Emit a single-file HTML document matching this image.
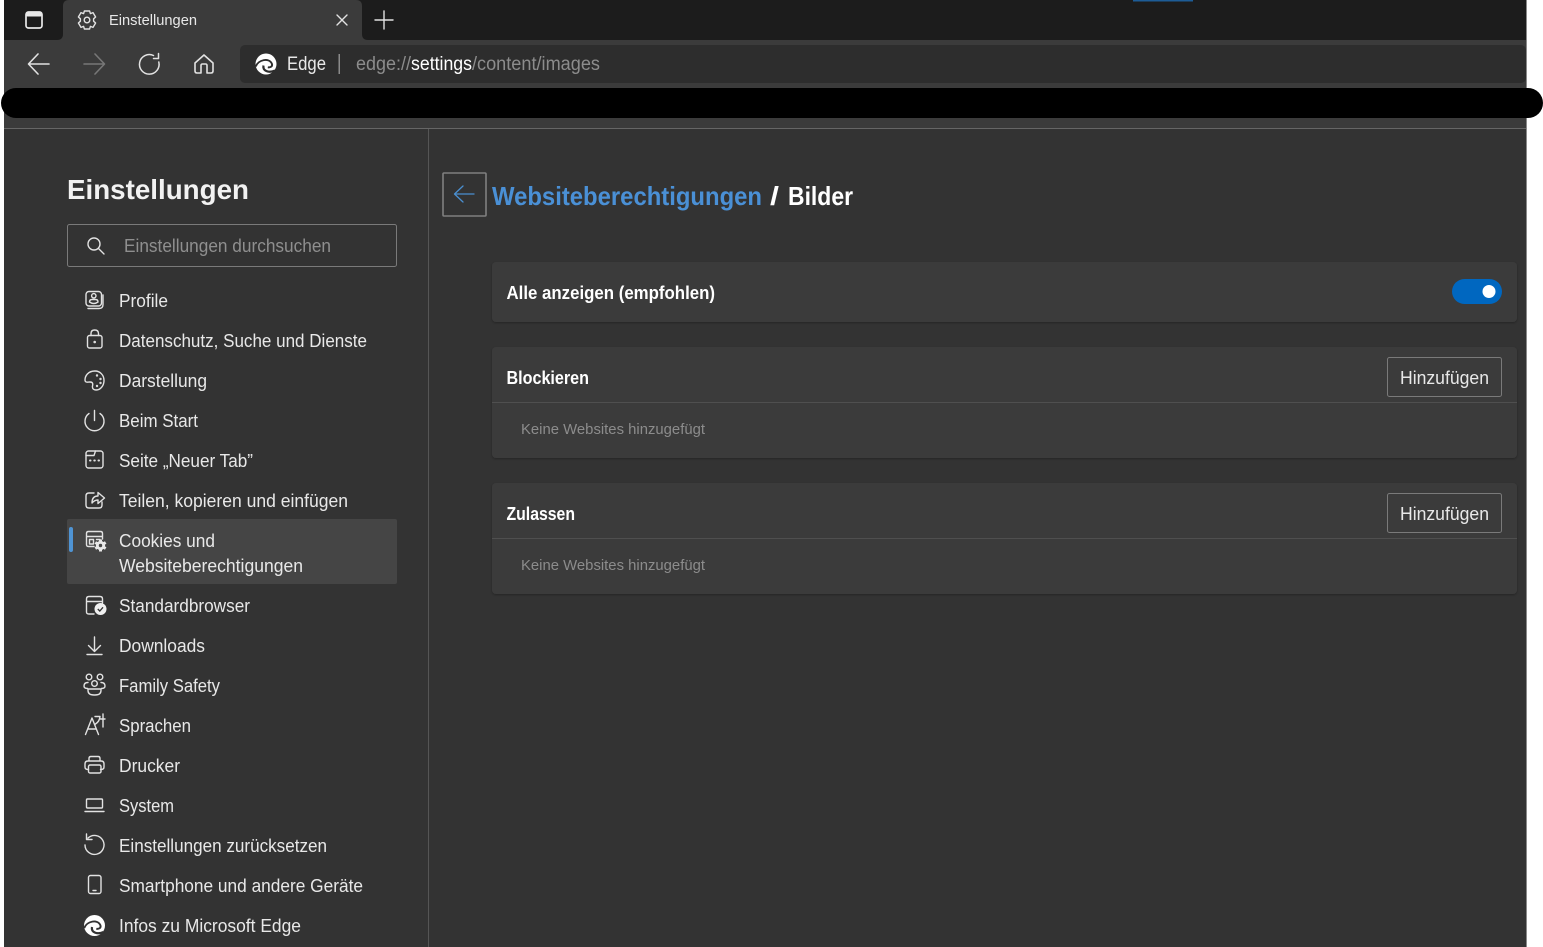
<!DOCTYPE html>
<html lang="de"><head><meta charset="utf-8"><title>Einstellungen</title>
<style>
html,body{margin:0;padding:0;background:#fff;overflow:hidden}
svg{display:block}
text{font-family:"Liberation Sans",sans-serif;fill:#e8e8e8;font-size:18px}
.i{fill:none;stroke:#e2e2e2;stroke-width:1.4;stroke-linecap:round;stroke-linejoin:round}
.b{font-weight:700;fill:#fff}
.m{font-size:15px;fill:#8c8c8c}
</style></head><body>
<svg width="1543" height="947" viewBox="0 0 1543 947" xmlns="http://www.w3.org/2000/svg">
<defs><filter id="s" x="-2%" y="-10%" width="104%" height="120%"><feDropShadow dx="0" dy="1" stdDeviation="1.2" flood-color="#000" flood-opacity=".3"/></filter></defs>
<rect x="4" y="0" width="1522" height="947" fill="#333"/>
<rect x="1526" y="0" width="1" height="947" fill="#8a8a8a"/>
<rect x="4" y="0" width="1522" height="40" fill="#1c1c1c"/>
<rect x="1133" y="0" width="60" height="1.5" fill="#1d5c96"/>
<rect x="4" y="40" width="1522" height="88" fill="#3b3b3b"/>
<path d="M57 40Q63 40 63 34V6Q63 0 69 0H356Q362 0 362 6V34Q362 40 368 40Z" fill="#3b3b3b"/>
<rect x="240" y="45" width="1286" height="38" rx="5" fill="#2d2d2d"/>
<rect x="1" y="88" width="1542" height="30" rx="15" fill="#000"/>
<rect x="4" y="128" width="1522" height="1" fill="#666"/>
<rect x="428" y="129" width="1" height="818" fill="#555"/>

<!-- tab strip -->
<rect x="26" y="12" width="16" height="16" rx="2.500" fill="none" stroke="#e8e8e8" stroke-width="1.700"/>
<rect x="26" y="12" width="16" height="4.500" rx="1.500" fill="#e8e8e8"/>
<g class="i" transform="translate(87,20)"><circle r="2.8"/><path d="M-2.6-9H2.6L3.4-6.4 6-7.4 8.6-3 6.6-1.2V1.2L8.6 3 6 7.4 3.4 6.4 2.6 9H-2.6L-3.4 6.4-6 7.4-8.6 3-6.6 1.2V-1.2L-8.6-3-6-7.4-3.4-6.4Z"/></g>
<text x="109" y="25" style="font-size:15px" textLength="88" lengthAdjust="spacingAndGlyphs">Einstellungen</text>
<path class="i" d="M337 15L347 25M347 15L337 25"/>
<path class="i" d="M384 11V29M375 20H393"/>

<!-- toolbar -->
<path class="i" style="stroke-width:1.6" d="M29 64H49M38 54L28.500 64 38 74"/>
<path class="i" style="stroke:#777;stroke-width:1.600" d="M84 64H104M95 54L104.500 64 95 74"/>
<path class="i" style="stroke-width:1.500" d="M158.800 62A9.800 9.800 0 1 1 153.500 55.500M158.500 53.500V58.500H153.500"/>
<path class="i" style="stroke-width:1.600" d="M195 63L204 55 213 63V71Q213 73 211 73H207V65.500Q207 64 205.500 64H202.500Q201 64 201 65.500V73H197Q195 73 195 71Z"/>
<g transform="translate(266,64)"><circle r="10.500" fill="#fff"/><path d="M-10.300 2.500C-7.500-4.500 3-6.500 5.800-.5 7 2.500 4.500 3.700 1.800 3.300" fill="none" stroke="#2d2d2d" stroke-width="1.900"/><path d="M-2.500 1.500C-3.500 6.500 2 9.500 9 6.500" fill="none" stroke="#2d2d2d" stroke-width="2.200"/></g>
<text x="287" y="70" style="font-size:19px" textLength="39" lengthAdjust="spacingAndGlyphs">Edge</text>
<rect x="338.500" y="54" width="1.500" height="20" fill="#8a8a8a"/>
<text x="356" y="70" style="font-size:19px;fill:#8c8c8c" textLength="55" lengthAdjust="spacingAndGlyphs">edge://</text>
<text x="411" y="70" style="font-size:19px;fill:#fff" textLength="61" lengthAdjust="spacingAndGlyphs">settings</text>
<text x="472" y="70" style="font-size:19px;fill:#8c8c8c" textLength="128" lengthAdjust="spacingAndGlyphs">/content/images</text>

<!-- sidebar head -->
<text x="67" y="199" class="b" style="font-size:28px;fill:#f2f2f2" textLength="182" lengthAdjust="spacingAndGlyphs">Einstellungen</text>
<rect x="67.500" y="224.500" width="329" height="42" rx="2" fill="#333" stroke="#7a7a7a"/>
<g class="i"><circle cx="94" cy="244" r="6"/><path d="M98.500 248.500L104 254"/></g>
<text x="124" y="252" style="fill:#8f8f8f" textLength="207" lengthAdjust="spacingAndGlyphs">Einstellungen durchsuchen</text>

<rect x="67" y="519" width="330" height="65" rx="2" fill="#454545"/>
<rect x="69" y="527" width="4" height="25" rx="2" fill="#4f94d4"/>

<!-- sidebar labels -->
<text x="119" y="307" textLength="49" lengthAdjust="spacingAndGlyphs">Profile</text>
<text x="119" y="347" textLength="248" lengthAdjust="spacingAndGlyphs">Datenschutz, Suche und Dienste</text>
<text x="119" y="387" textLength="88" lengthAdjust="spacingAndGlyphs">Darstellung</text>
<text x="119" y="427" textLength="79" lengthAdjust="spacingAndGlyphs">Beim Start</text>
<text x="119" y="467" textLength="134" lengthAdjust="spacingAndGlyphs">Seite „Neuer Tab”</text>
<text x="119" y="507" textLength="229" lengthAdjust="spacingAndGlyphs">Teilen, kopieren und einfügen</text>
<text x="119" y="547" textLength="96" lengthAdjust="spacingAndGlyphs">Cookies und</text>
<text x="119" y="572" textLength="184" lengthAdjust="spacingAndGlyphs">Websiteberechtigungen</text>
<text x="119" y="612" textLength="131" lengthAdjust="spacingAndGlyphs">Standardbrowser</text>
<text x="119" y="652" textLength="86" lengthAdjust="spacingAndGlyphs">Downloads</text>
<text x="119" y="692" textLength="101" lengthAdjust="spacingAndGlyphs">Family Safety</text>
<text x="119" y="732" textLength="72" lengthAdjust="spacingAndGlyphs">Sprachen</text>
<text x="119" y="772" textLength="61" lengthAdjust="spacingAndGlyphs">Drucker</text>
<text x="119" y="812" textLength="55" lengthAdjust="spacingAndGlyphs">System</text>
<text x="119" y="852" textLength="208" lengthAdjust="spacingAndGlyphs">Einstellungen zurücksetzen</text>
<text x="119" y="892" textLength="244" lengthAdjust="spacingAndGlyphs">Smartphone und andere Geräte</text>
<text x="119" y="932" textLength="182" lengthAdjust="spacingAndGlyphs">Infos zu Microsoft Edge</text>

<!-- sidebar icons -->
<g class="i">
<rect x="86" y="291.500" width="15.500" height="14.500" rx="3"/><path d="M88 308.500H99Q103 308.500 103 304.500V295"/><circle cx="93.800" cy="295.800" r="2.200"/><path d="M89.500 302Q89.500 299.500 92 299.500H95.500Q98 299.500 98 302Q93.800 305 89.500 302Z"/>
<rect x="87.500" y="335.500" width="14.500" height="12.500" rx="2"/><path d="M91 335.500V333.500Q91 330 94.700 330T98.500 333.500V335.500"/><circle cx="94.700" cy="342" r=".6"/>
<path d="M95 371C88 371 85 376 85 380C85 383 88 382 90 382C93 382 93 384 92.500 386C92 389 94 390 96 390C101 390 104 385 104 380.500C104 375 100 371 95 371Z"/><circle cx="97" cy="375.500" r=".5"/><circle cx="100.500" cy="379" r=".5"/><circle cx="100.500" cy="383" r=".5"/><circle cx="97" cy="386" r=".5"/>
<path d="M94.500 410.500V420.500M89 413.500A9.500 9.500 0 1 0 100 413.500"/>
<rect x="86" y="451" width="17" height="17" rx="2.500"/><path d="M86 455.500H94L95.500 451"/><path d="M90 460.500H90.500M94.300 460.500H94.800M98.500 460.500H99" stroke-width="2"/>
<path d="M94 493H89Q86 493 86 496V505Q86 508 89 508H99Q102 508 102 505V502"/><path d="M92 503Q92 496 98 496V492.500L104.500 498 98 503.500V500Q94.500 500 92 503Z"/>
<path d="M94 546.500H88.500Q86.500 546.500 86.500 544.500V533.500Q86.500 531.500 88.500 531.500H100.500Q102.500 531.500 102.500 533.500V539M86.500 536.500H102.500M89.500 539.500H93.500V544H89.500ZM96.500 539.500H100"/>
<path d="M94 614H89Q86.500 614 86.500 612V599Q86.500 596.500 89 596.500H100Q102.500 596.500 102.500 599V603M86.500 601.500H102.500"/>
<path d="M94.500 637V651M88.500 645.500L94.500 651.500 100.500 645.500M87 654.500H102"/>
<circle cx="89" cy="677" r="2.800"/><circle cx="100" cy="677" r="2.800"/><circle cx="94.500" cy="683.500" r="2.800"/><path d="M88 682.500Q84 682.500 84 686Q84 688.500 87.500 688.500M101 682.500Q105 682.500 105 686Q105 688.500 101.500 688.500M88 689H101V690.500Q101 695 95 695H94Q88 695 88 690.500Z"/>
<path d="M85.500 734.500L92 718 98.500 734.500M88 729H96M95 716.500H100Q99.500 721.500 95.500 724M103 714V727M100.500 719H105"/>
<path d="M89 761V758.500Q89 756.500 91 756.500H98Q100 756.500 100 758.500V761M88.500 769.500H88Q85 769.500 85 767V764Q85 761 88 761H101Q104 761 104 764V767Q104 769.500 101 769.500H100.500"/><rect x="88.500" y="765" width="12.500" height="8" rx="1.500"/>
<rect x="86.500" y="799" width="16" height="9" rx="1"/><path d="M85 811.500H104"/>
<g transform="translate(-.5 -1)"><path d="M88.500 839A9.500 9.500 0 1 1 85.500 846M87 835V840.500H92.500"/></g>
<rect x="88.500" y="875.500" width="12.500" height="18" rx="2"/><path d="M93 890.500H96"/>
</g>
<g transform="translate(100.500,545.500)"><g fill="#e8e8e8"><circle r="4.600"/><rect x="-1.500" y="-6" width="3" height="12"/><rect x="-1.500" y="-6" width="3" height="12" transform="rotate(60)"/><rect x="-1.500" y="-6" width="3" height="12" transform="rotate(120)"/></g><circle r="1.700" fill="#454545"/></g>
<circle cx="100.500" cy="609" r="6" fill="#f0f0f0"/><path d="M97.800 609L99.800 611 103 607.300" fill="none" stroke="#333" stroke-width="1.300"/>
<g transform="translate(94.500,925.500)"><circle r="10.500" fill="#fff"/><path d="M-10.300 2.500C-7.500-4.500 3-6.500 5.800-.5 7 2.500 4.500 3.700 1.800 3.300" fill="none" stroke="#333" stroke-width="1.900"/><path d="M-2.500 1.500C-3.500 6.500 2 9.500 9 6.500" fill="none" stroke="#333" stroke-width="2.200"/></g>

<!-- content header -->
<rect x="443" y="173" width="43" height="43" rx="1" fill="none" stroke="#808080" stroke-width="1.600"/>
<path d="M455 194H474M463 186L454.500 194 463 202" fill="none" stroke="#4a8fd0" stroke-width="1.300" stroke-linecap="round" stroke-linejoin="round"/>
<text x="492" y="205" style="font-size:26px;font-weight:700;fill:#4a90d6" textLength="270" lengthAdjust="spacingAndGlyphs">Websiteberechtigungen</text>
<text x="770" y="205" class="b" style="font-size:26px" textLength="9" lengthAdjust="spacingAndGlyphs">/</text>
<text x="788" y="205" class="b" style="font-size:26px" textLength="65" lengthAdjust="spacingAndGlyphs">Bilder</text>

<!-- cards -->
<rect x="492" y="262" width="1025" height="60" rx="4" fill="#3b3b3b" filter="url(#s)"/>
<rect x="492" y="347" width="1025" height="111" rx="4" fill="#3b3b3b" filter="url(#s)"/>
<rect x="492" y="483" width="1025" height="111" rx="4" fill="#3b3b3b" filter="url(#s)"/>
<rect x="492" y="402" width="1025" height="1" fill="#4f4f4f"/>
<rect x="492" y="538" width="1025" height="1" fill="#4f4f4f"/>

<text x="506.500" y="299" class="b" textLength="208.500" lengthAdjust="spacingAndGlyphs">Alle anzeigen (empfohlen)</text>
<rect x="1452" y="279" width="50" height="25" rx="12.500" fill="#0067c0"/>
<circle cx="1489" cy="291.500" r="6.500" fill="#fff"/>

<text x="506.500" y="384" class="b" textLength="82.500" lengthAdjust="spacingAndGlyphs">Blockieren</text>
<rect x="1387.500" y="357.500" width="114" height="39" rx="2" fill="none" stroke="#7a7a7a"/>
<text x="1400" y="384" textLength="89" lengthAdjust="spacingAndGlyphs">Hinzufügen</text>
<text x="521" y="434" class="m" textLength="184" lengthAdjust="spacingAndGlyphs">Keine Websites hinzugefügt</text>

<text x="506.500" y="520" class="b" textLength="68.500" lengthAdjust="spacingAndGlyphs">Zulassen</text>
<rect x="1387.500" y="493.500" width="114" height="39" rx="2" fill="none" stroke="#7a7a7a"/>
<text x="1400" y="520" textLength="89" lengthAdjust="spacingAndGlyphs">Hinzufügen</text>
<text x="521" y="570" class="m" textLength="184" lengthAdjust="spacingAndGlyphs">Keine Websites hinzugefügt</text>
</svg>
</body></html>
